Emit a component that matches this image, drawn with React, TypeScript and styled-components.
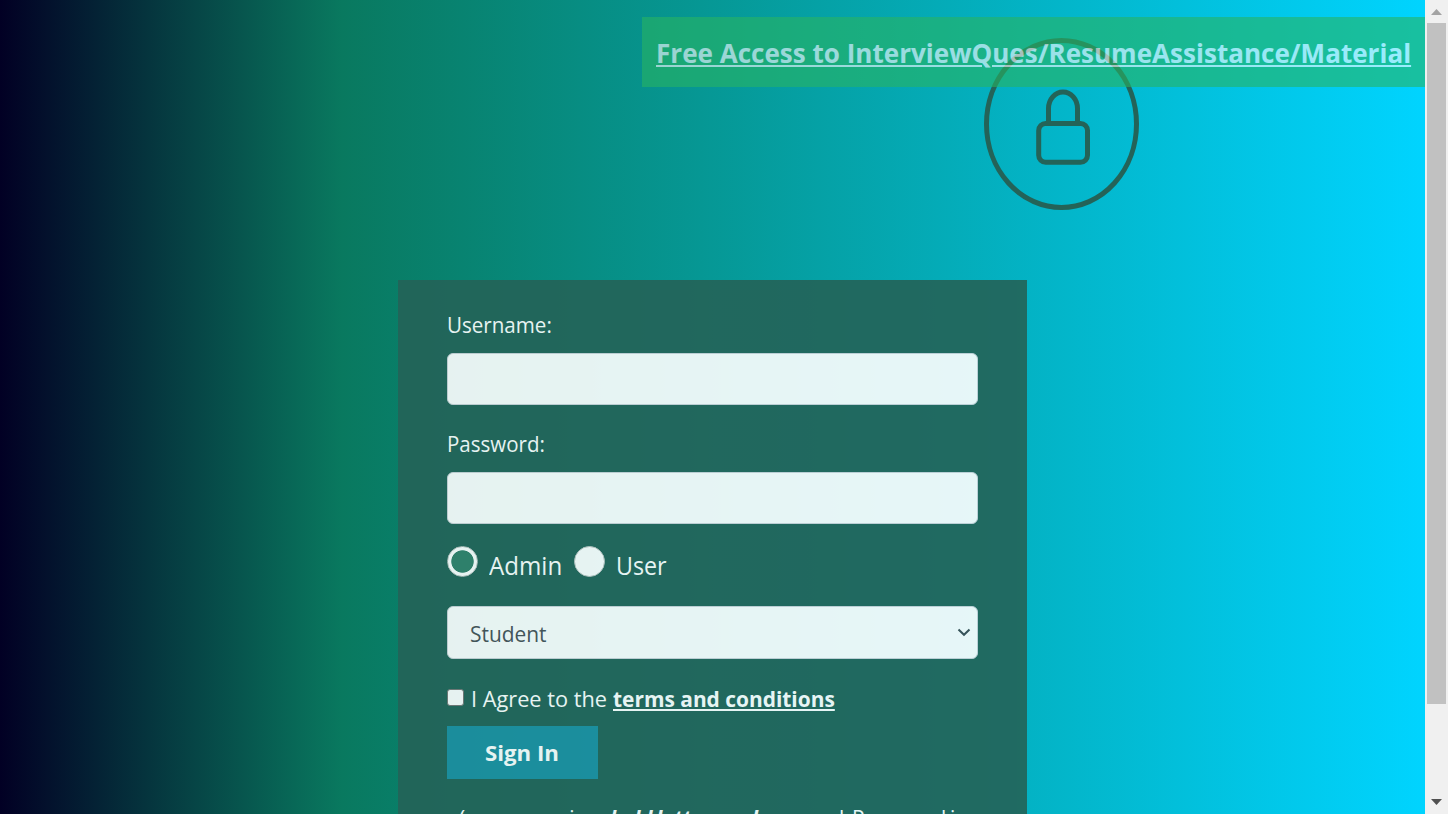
import React from 'react';
import styled, { createGlobalStyle } from 'styled-components';

const GlobalStyle = createGlobalStyle`
  * { box-sizing: border-box; }
  html, body { margin: 0; height: 100%; overflow: hidden; }
  body { font-family: "Open Sans", "Noto Sans", sans-serif; }
`;

const Shell = styled.div`
  display: flex;
  width: 1448px;
  height: 814px;
  overflow: hidden;
`;

const Page = styled.main`
  position: relative;
  width: 1425px;
  height: 814px;
  overflow: hidden;
  background: linear-gradient(90deg, rgb(2, 0, 36) 0%, rgb(9, 121, 95) 24%, rgb(0, 212, 255) 100%);
`;

const Emblem = styled.svg`
  position: absolute;
  left: 980px;
  top: 34px;
  width: 164px;
  height: 180px;
  fill: none;
  stroke: #246358;
  stroke-width: 5;
`;

const Banner = styled.div`
  position: absolute;
  right: 0;
  top: 17px;
  width: 783px;
  height: 70px;
  padding: 16px 14px;
  background: #28b463;
  opacity: 0.6;
`;

const BannerLink = styled.a`
  display: inline-block;
  color: #fff;
  font-size: 27px;
  font-weight: 700;
  line-height: 40px;
  text-decoration: underline;
  text-decoration-thickness: 2px;
  text-underline-offset: 2px;
  white-space: nowrap;
  transform: scaleX(0.965);
  transform-origin: left;
`;

const Card = styled.form`
  width: 629px;
  height: 600px;
  margin: 280px 0 0 398px;
  padding: 29px 49px;
  background: #246358;
  opacity: 0.9;
  color: #fff;
`;

/* Condensed run of text in a slot of fixed width. */
const Slot = styled.span<{ $w: number }>`
  display: block;
  flex: none;
  width: ${(p) => p.$w}px;
  white-space: nowrap;
`;

const Run = styled.span<{ $size?: number; $bold?: boolean; $italic?: boolean; $underline?: boolean; $scale?: number }>`
  display: inline-block;
  font-size: ${(p) => p.$size ?? 22}px;
  font-weight: ${(p) => (p.$bold ? 700 : 400)};
  font-style: ${(p) => (p.$italic ? 'italic' : 'normal')};
  line-height: ${(p) => (p.$size ? 34 : 30)}px;
  text-decoration: ${(p) => (p.$underline ? 'underline' : 'none')};
  text-decoration-thickness: 2px;
  text-underline-offset: 2px;
  transform: scaleX(${(p) => p.$scale ?? 0.95});
  transform-origin: left;
`;

const Label = styled.label`
  display: block;
  height: 44px;
  line-height: 30px;
`;

const Field = styled.input`
  display: block;
  width: 531px;
  height: 52px;
  margin: 0 0 23px;
  border: 1px solid #ced4da;
  border-radius: 6px;
  background: #fff;
`;

const Roles = styled.div`
  display: flex;
  height: 59px;
`;

const Radio = styled.span<{ $checked?: boolean }>`
  flex: none;
  width: 31px;
  height: 31px;
  margin: -1px 11px 0 0;
  border: 1px solid #bcc4c2;
  border-radius: 50%;
  background: ${(p) =>
    p.$checked ? 'radial-gradient(circle, #33806b 10.8px, #fff 11.6px)' : '#fff'};
`;

const Role = styled(Slot)`
  padding-top: 1px;
`;

const Select = styled.div`
  display: flex;
  align-items: center;
  justify-content: space-between;
  width: 531px;
  height: 53px;
  padding: 0 6px 0 22px;
  border: 1px solid #ced4da;
  border-radius: 6px;
  background: #fff;
  color: #495057;
`;

const Chevron = styled.svg`
  width: 14px;
  height: 9px;
  fill: none;
  stroke: #3c4a50;
  stroke-width: 2;
`;

const Agree = styled.div`
  display: flex;
  height: 43px;
  margin-top: 24px;
`;

const Checkbox = styled.span`
  flex: none;
  width: 17px;
  height: 17px;
  margin: 6px 7px 0 0;
  border: 1px solid #767676;
  border-radius: 3px;
  background: #fff;
`;

const SignIn = styled.button`
  display: flex;
  align-items: center;
  width: 151px;
  height: 53px;
  padding: 0 0 1px 38px;
  border: 0;
  background: #1e8fa1;
  color: #fff;
  font-family: inherit;
`;

const Hint = styled.div`
  display: flex;
  margin-top: 23px;
  padding-left: 12px;
`;

const Scrollbar = styled.aside`
  display: flex;
  flex-direction: column;
  align-items: center;
  width: 23px;
  height: 814px;
  background: #f0f0f0;
`;

const Thumb = styled.div`
  width: 19px;
  height: 681px;
  background: #c1c1c1;
`;

const Arrow = styled.svg<{ $dim?: boolean }>`
  width: 11px;
  height: 6px;
  margin: ${(p) => (p.$dim ? '9px 0 8px' : '95px 0 0')};
  fill: ${(p) => (p.$dim ? '#a3a3a3' : '#505050')};
`;

export default function App() {
  return (
    <>
      <GlobalStyle />
      <Shell>
        <Page>
          <Emblem viewBox="0 0 164 180">
            <ellipse cx="81.5" cy="90" rx="75" ry="83.5" />
            <rect x="58.7" y="89.5" width="48.8" height="38.8" rx="7" />
            <path d="M68.5 89V74.5a14.5 16.5 0 0 1 29 0V89" />
          </Emblem>
          <Banner>
            <BannerLink>Free Access to InterviewQues/ResumeAssistance/Material</BannerLink>
          </Banner>
          <Card>
            <Label><Run $scale={0.935}>Username:</Run></Label>
            <Field type="text" />
            <Label><Run $scale={0.933}>Password:</Run></Label>
            <Field type="password" />
            <Roles>
              <Radio $checked />
              <Role $w={85}><Run $size={25} $scale={0.965}>Admin</Run></Role>
              <Radio />
              <Role $w={60}><Run $size={25} $scale={0.93}>User</Run></Role>
            </Roles>
            <Select>
              <Run>Student</Run>
              <Chevron viewBox="0 0 14 9"><path d="M1.5 1.5 7 6.8l5.5-5.3" /></Chevron>
            </Select>
            <Agree>
              <Checkbox />
              <Slot $w={142}><Run $scale={0.988}>I Agree to the</Run></Slot>
              <Slot $w={230}><Run $bold $underline>terms and conditions</Run></Slot>
            </Agree>
            <SignIn type="button"><Run $bold $scale={1.01}>Sign In</Run></SignIn>
            <Hint>
              <Slot $w={151}><Run>(username in</Run></Slot>
              <Slot $w={46}><Run $bold $italic $scale={0.93}>bold</Run></Slot>
              <Slot $w={71}><Run $bold $italic>letters</Run></Slot>
              <Slot $w={80}><Run $bold $italic>only</Run></Slot>
              <Slot $w={45}><Run>and</Run></Slot>
              <Slot $w={98}><Run>Password</Run></Slot>
              <Slot $w={20}><Run>is</Run></Slot>
            </Hint>
          </Card>
        </Page>
        <Scrollbar>
          <Arrow $dim viewBox="0 0 11 6"><path d="M0 6 5.5 0 11 6z" /></Arrow>
          <Thumb />
          <Arrow viewBox="0 0 11 6"><path d="M0 0 5.5 6 11 0z" /></Arrow>
        </Scrollbar>
      </Shell>
    </>
  );
}
